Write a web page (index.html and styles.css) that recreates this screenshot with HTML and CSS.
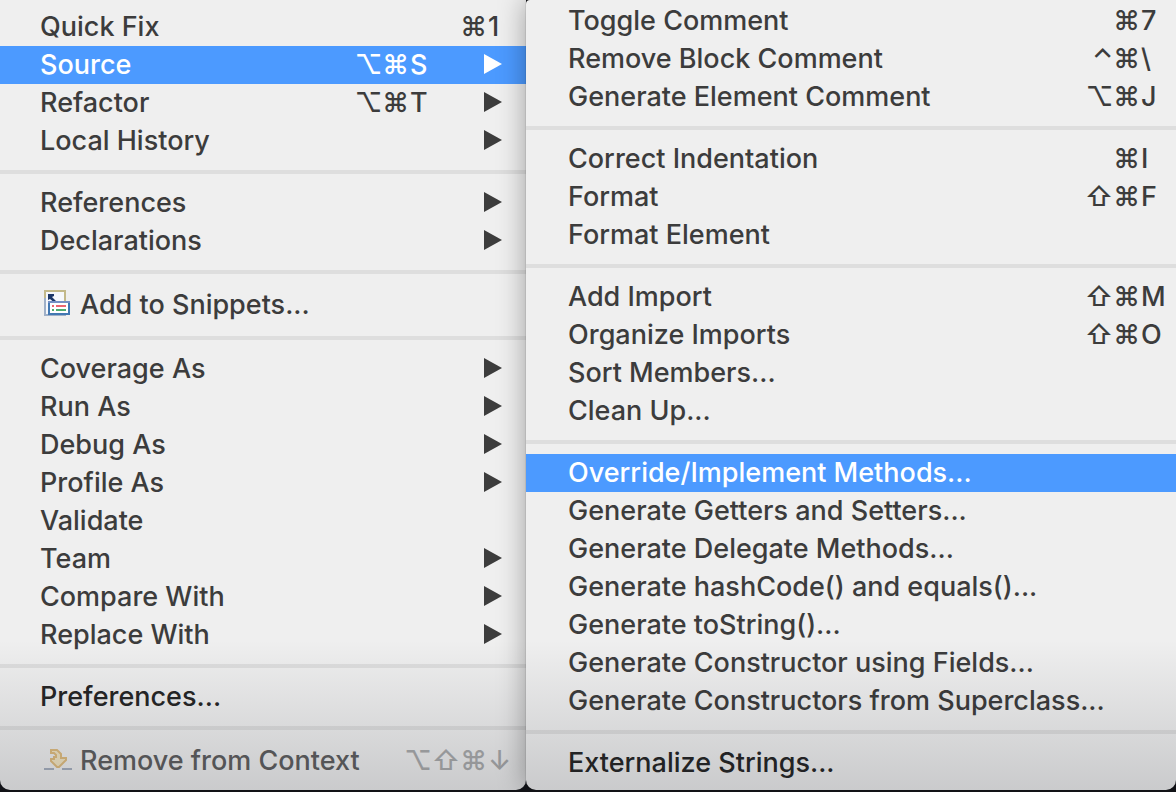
FILE: index.html
```html
<!DOCTYPE html>
<html lang="en">
  <head>
    <meta charset="utf-8" />
    <title>Source menu</title>
    <link rel="stylesheet" href="styles.css">
  </head>
  <body>
    <svg class="defs" width="0" height="0">
      <symbol id="arrow" viewBox="0 0 18 20">
        <path d="M0 0L18 10L0 20Z" fill="currentColor" />
      </symbol>
    </svg>
    <div class="menus">
      <ul class="menu context">
        <li><button class="item"><span class="label">Quick Fix</span><kbd>⌘<span class="key">1</span></kbd></button></li>
        <li><button class="item active"><span class="label">Source</span><kbd>⌥⌘<span class="key">S</span></kbd><svg class="arrow"><use href="#arrow" /></svg></button></li>
        <li><button class="item"><span class="label">Refactor</span><kbd>⌥⌘<span class="key">T</span></kbd><svg class="arrow"><use href="#arrow" /></svg></button></li>
        <li><button class="item"><span class="label">Local History</span><svg class="arrow"><use href="#arrow" /></svg></button></li>
        <li class="line"></li>
        <li><button class="item"><span class="label">References</span><svg class="arrow"><use href="#arrow" /></svg></button></li>
        <li><button class="item"><span class="label">Declarations</span><svg class="arrow"><use href="#arrow" /></svg></button></li>
        <li class="line"></li>
        <li>
          <button class="item tall">
            <svg class="icon" viewBox="0 0 32 32">
              <rect x="5" y="3" width="20" height="24" fill="#f6f8fc" stroke="#c3b98a" stroke-width="2" />
              <path d="M5 10V27H26" fill="none" stroke="#9fb0c8" stroke-width="2" />
              <path d="M8 6H14V8L12 9L18 15L16 16L10 11L8 12Z" fill="#1d3768" />
              <rect x="9" y="14" width="20" height="12" fill="#fff" stroke="#4278b2" stroke-width="2" />
              <path d="M8 14H30" stroke="#7590c4" stroke-width="2" />
              <path d="M12 18H14M16 18H26" stroke="#ec6670" stroke-width="2" />
              <path d="M12 22H14M16 22H26" stroke="#4fac70" stroke-width="2" />
            </svg>
            <span class="label">Add to Snippets...</span>
          </button>
        </li>
        <li class="line"></li>
        <li><button class="item"><span class="label">Coverage As</span><svg class="arrow"><use href="#arrow" /></svg></button></li>
        <li><button class="item"><span class="label">Run As</span><svg class="arrow"><use href="#arrow" /></svg></button></li>
        <li><button class="item"><span class="label">Debug As</span><svg class="arrow"><use href="#arrow" /></svg></button></li>
        <li><button class="item"><span class="label">Profile As</span><svg class="arrow"><use href="#arrow" /></svg></button></li>
        <li><button class="item"><span class="label">Validate</span></button></li>
        <li><button class="item"><span class="label">Team</span><svg class="arrow"><use href="#arrow" /></svg></button></li>
        <li><button class="item"><span class="label">Compare With</span><svg class="arrow"><use href="#arrow" /></svg></button></li>
        <li><button class="item"><span class="label">Replace With</span><svg class="arrow"><use href="#arrow" /></svg></button></li>
        <li class="line"></li>
        <li><button class="item dark"><span class="label">Preferences...</span></button></li>
        <li class="line"></li>
        <li>
          <button class="item tall" disabled>
            <svg class="icon" viewBox="0 0 32 32">
              <path d="M4 25H14M22 25H32" stroke="#a7b0bf" stroke-width="2" />
              <path d="M11 6H17L21 10V14H26V16L19 23H17L11 17V15H14V13H16V11L14 9H11Z" fill="#f3e6c4" stroke="#e0bd80" stroke-width="2" />
            </svg>
            <span class="label">Remove from Context</span><kbd>⌥⇧⌘<span class="key">↓</span></kbd>
          </button>
        </li>
      </ul>
      <ul class="menu submenu">
        <li><button class="item"><span class="label">Toggle Comment</span><kbd>⌘<span class="key">7</span></kbd></button></li>
        <li><button class="item"><span class="label">Remove Block Comment</span><kbd>⌃⌘<span class="key">\</span></kbd></button></li>
        <li><button class="item"><span class="label">Generate Element Comment</span><kbd>⌥⌘<span class="key">J</span></kbd></button></li>
        <li class="line"></li>
        <li><button class="item"><span class="label">Correct Indentation</span><kbd>⌘<span class="key">I</span></kbd></button></li>
        <li><button class="item"><span class="label">Format</span><kbd>⇧⌘<span class="key">F</span></kbd></button></li>
        <li><button class="item"><span class="label">Format Element</span></button></li>
        <li class="line"></li>
        <li><button class="item"><span class="label">Add Import</span><kbd>⇧⌘<span class="key">M</span></kbd></button></li>
        <li><button class="item"><span class="label">Organize Imports</span><kbd>⇧⌘<span class="key">O</span></kbd></button></li>
        <li><button class="item"><span class="label">Sort Members...</span></button></li>
        <li><button class="item"><span class="label">Clean Up...</span></button></li>
        <li class="line"></li>
        <li><button class="item active"><span class="label">Override/Implement Methods...</span></button></li>
        <li><button class="item"><span class="label">Generate Getters and Setters...</span></button></li>
        <li><button class="item"><span class="label">Generate Delegate Methods...</span></button></li>
        <li><button class="item"><span class="label">Generate hashCode() and equals()...</span></button></li>
        <li><button class="item"><span class="label">Generate toString()...</span></button></li>
        <li><button class="item"><span class="label">Generate Constructor using Fields...</span></button></li>
        <li><button class="item"><span class="label">Generate Constructors from Superclass...</span></button></li>
        <li class="line"></li>
        <li><button class="item dark"><span class="label">Externalize Strings...</span></button></li>
      </ul>
    </div>
  </body>
</html>
```
FILE: styles.css
```css
* {
  box-sizing: border-box;
  margin: 0;
  padding: 0;
}
body {
  background: #121317;
  font-family: Inter, "Liberation Sans", sans-serif;
  font-size: 27px;
  font-weight: 450;
  color: #3c3c3c;
}
.defs {
  position: absolute;
}
.menus {
  position: relative;
  display: flex;
}
/* shade at the foot of both menus */
.menus::after {
  content: "";
  position: absolute;
  left: 0;
  right: 0;
  bottom: 0;
  height: 150px;
  background: linear-gradient(rgba(10, 14, 24, 0), rgba(10, 14, 24, 0.16));
  pointer-events: none;
}
.menu {
  list-style: none;
  padding-bottom: 8px;
  background: #efefef;
}
.context {
  flex: 0 0 526px;
  padding-top: 8px;
  border-radius: 0 0 10px 10px;
}
.submenu {
  position: relative;
  flex: 1;
  padding-top: 2px;
  border-radius: 4px 0 10px 10px;
  box-shadow: 0 0 1px rgba(0, 0, 0, 0.7), 0 0 28px rgba(0, 0, 0, 0.35);
}
.item {
  display: flex;
  align-items: center;
  width: 100%;
  height: 38px;
  padding: 0 24px 0 40px;
  border: 0;
  background: none;
  color: inherit;
  font: inherit;
  line-height: 36px;
  text-align: left;
  white-space: nowrap;
}
.submenu .item {
  padding: 0 8px 0 42px;
}
.item.active {
  background: #4c9aff;
  color: #fff;
}
.item.dark {
  color: #262626;
}
.item.tall {
  height: 42px;
}
.item:disabled {
  color: #5f5f60;
}
.item:disabled kbd {
  color: #aaabac;
}
.label {
  flex: 1;
}
.icon {
  width: 32px;
  height: 32px;
  margin: 0 8px 2px 0;
}
kbd {
  display: flex;
  font: inherit;
}
.key {
  width: 14px;
  margin-left: 1px;
}
.submenu .key {
  width: 27px;
}
.arrow {
  width: 18px;
  height: 20px;
  margin: 0 0 2px 60px;
}
.line {
  height: 4px;
  margin: 10px 0;
  background: #dedede;
}
```
